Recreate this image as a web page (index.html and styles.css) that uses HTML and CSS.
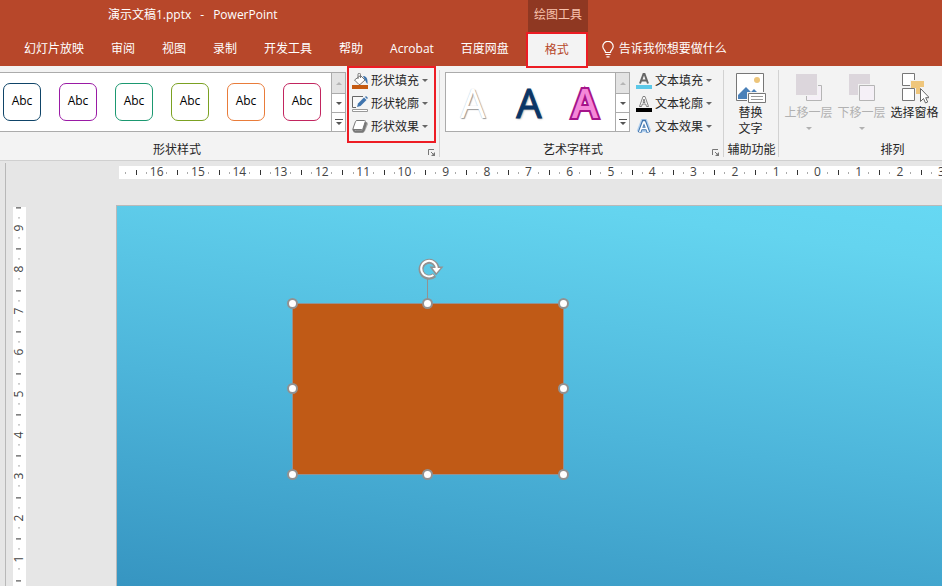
FILE: index.html
```html
<!DOCTYPE html>
<html lang="zh-CN">
<head>
<meta charset="utf-8">
<title>演示文稿1.pptx - PowerPoint</title>
<link rel="stylesheet" href="styles.css">
</head>
<body>
<svg class="defs" aria-hidden="true">
  <symbol id="caret" viewBox="0 0 6 3"><path d="M0 0h6L3 3z" fill="currentColor"/></symbol>
  <symbol id="up" viewBox="0 0 6 3"><path d="M0 3h6L3 0z" fill="currentColor"/></symbol>
  <symbol id="more" viewBox="0 0 8 7"><path d="M0 0h8v1H0zM1 3h6L4 6z" fill="currentColor"/></symbol>
  <symbol id="launcher" viewBox="0 0 8 8"><path d="M.5 6V.5H6M3 3l3 3" fill="none" stroke="currentColor"/><path d="M7 3v4H3z" fill="currentColor"/></symbol>
</svg>
<header class="header">
  <div class="titlebar">
    <h1 class="title"><span>演示文稿1.pptx</span><span>-</span><span>PowerPoint</span></h1>
    <span class="context">绘图工具</span>
  </div>
  <nav class="tabs">
    <button class="tab">幻灯片放映</button>
    <button class="tab">审阅</button>
    <button class="tab">视图</button>
    <button class="tab">录制</button>
    <button class="tab">开发工具</button>
    <button class="tab">帮助</button>
    <button class="tab">Acrobat</button>
    <button class="tab">百度网盘</button>
    <button class="tab active">格式</button>
    <button class="tell">
      <svg width="12" height="17" viewBox="0 0 12 17"><path d="M3.5 11.5C3.5 9 .8 8.500 .8 5.500A5 5 0 0 1 11.200 5.500C11.200 8.500 8.500 9 8.500 11.500zM3.500 13.500h5M4.500 15.800h3" fill="none" stroke="#fff" stroke-width="1.200"/></svg>
      告诉我你想要做什么
    </button>
  </nav>
</header>
<section class="ribbon">
  <div class="group group-shape">
    <div class="tools">
      <div class="gallery">
        <div class="swatches">
          <button class="swatch navy">Abc</button>
          <button class="swatch purple">Abc</button>
          <button class="swatch teal">Abc</button>
          <button class="swatch green">Abc</button>
          <button class="swatch orange">Abc</button>
          <button class="swatch rose">Abc</button>
        </div>
        <div class="scroller">
          <button aria-label="上一行" disabled><svg width="6" height="3"><use href="#up"/></svg></button>
          <button aria-label="下一行"><svg width="6" height="3"><use href="#caret"/></svg></button>
          <button aria-label="其他"><svg width="8" height="7"><use href="#more"/></svg></button>
        </div>
      </div>
      <div class="commands marked">
        <button class="command">
          <svg width="16" height="16" viewBox="0 0 16 16"><path d="M8.500 2.500l4.500 4.500-5 4.500H7L2.500 7z" fill="#fff" stroke="#777"/><path d="M6 6V1.500a1.200 1.200 0 0 1 2.500 0V5" fill="none" stroke="#777"/><path d="M11 3c3 0 5 2 4.500 8-1.500-1-1.500-3-2.500-4z" fill="#3f74ad"/><path d="M0 12h16v4H0z" fill="#c55a11"/></svg>
          形状填充<svg class="caret" width="6" height="3"><use href="#caret"/></svg></button>
        <button class="command">
          <svg width="16" height="16" viewBox="0 0 16 16"><path d="M11 .5H.5v11H4" fill="#f8f8f8" stroke="#666"/><path d="M5 11l1-3.500 6-6 2.500 2.500-6 6z" fill="#3f74ad"/><path d="M13 1l1-1 2 2-1 1z" fill="#3f74ad"/><path d="M.5 13.500h15v2H.5z" fill="#fff" stroke="#999"/></svg>
          形状轮廓<svg class="caret" width="6" height="3"><use href="#caret"/></svg></button>
        <button class="command">
          <svg width="16" height="16" viewBox="0 0 16 16"><path d="M5 3h10l1 2-3 7-2 2H3z" fill="#aaa"/><path d="M5 1.500h7.500q1.200 0 .8 1L11 9.500q-.3 1-1.500 1H2q-1.300 0-1-1L3.500 2.500q.4-1 1.500-1z" fill="#fff" stroke="#777"/><path d="M1 10l1.500 2.500H10q1 0 1.500-1l2.500-8" fill="none" stroke="#777" stroke-width="2"/></svg>
          形状效果<svg class="caret" width="6" height="3"><use href="#caret"/></svg></button>
      </div>
    </div>
    <footer class="caption"><span>形状样式</span><button class="launch" aria-label="设置形状格式"><svg width="8" height="8"><use href="#launcher"/></svg></button></footer>
  </div>
  <div class="group group-art">
    <div class="tools">
      <div class="gallery boxed">
        <div class="letters">
          <button class="letter white">A</button>
          <button class="letter blue">A</button>
          <button class="letter pink">A</button>
        </div>
        <div class="scroller">
          <button aria-label="上一行" disabled><svg width="6" height="3"><use href="#up"/></svg></button>
          <button aria-label="下一行"><svg width="6" height="3"><use href="#caret"/></svg></button>
          <button aria-label="其他"><svg width="8" height="7"><use href="#more"/></svg></button>
        </div>
      </div>
      <div class="commands">
        <button class="command">
          <svg width="16" height="16" viewBox="0 0 16 16"><path d="M4 10.500L7.500 1h1L12 10.500M5.500 7.500h5" fill="none" stroke="#666" stroke-width="2"/><path d="M0 12h16v4H0z" fill="#5bc8e8"/></svg>
          文本填充<svg class="caret" width="6" height="3"><use href="#caret"/></svg></button>
        <button class="command">
          <svg width="16" height="16" viewBox="0 0 16 16"><path d="M3.500 10.500L7 .5h2l3.500 10h-2l-.8-2.500H6.300l-.8 2.500zM7 6.500h2L8 3z" fill="#fff" stroke="#666" stroke-width=".8"/><path d="M0 12h16v4H0z" fill="#000"/></svg>
          文本轮廓<svg class="caret" width="6" height="3"><use href="#caret"/></svg></button>
        <button class="command">
          <svg width="16" height="16" viewBox="0 0 16 16"><path d="M3.500 13L7.500 2.500h1L12.500 13M5 10h6" fill="none" stroke="#b5d2ef" stroke-width="6"/><path d="M3.500 13.500L7.500 2.500h1L12.500 13.500M5 9.500h6" fill="none" stroke="#3f74ad" stroke-width="3.600"/><path d="M3.700 13L7.600 3h.8l3.900 10M5 9.500h6" fill="none" stroke="#fff" stroke-width="1.700"/></svg>
          文本效果<svg class="caret" width="6" height="3"><use href="#caret"/></svg></button>
      </div>
    </div>
    <footer class="caption"><span>艺术字样式</span><button class="launch" aria-label="设置文本效果格式"><svg width="8" height="8"><use href="#launcher"/></svg></button></footer>
  </div>
  <div class="group group-alt">
    <div class="tools">
      <button class="big">
        <svg width="30" height="32" viewBox="0 0 30 32"><path d="M.5.500h27v27H.5z" fill="#fff" stroke="#777"/><circle cx="21" cy="7" r="3" fill="#edc57b"/><path d="M2 26v-4l8-8 5 5 3-3 6 6v4z" fill="#4a80b8"/><path d="M11 19h19v13H11z" fill="#f3f3f3"/><path d="M12.500 20.500h17v9h-17z" fill="#fff" stroke="#777"/><path d="M15 23.500h12M15 26.500h12" stroke="#999"/></svg>
        <span>替换<br>文字</span>
      </button>
    </div>
    <footer class="caption"><span>辅助功能</span></footer>
  </div>
  <div class="group group-arrange">
    <div class="tools">
      <button class="big" disabled>
        <svg width="28" height="32" viewBox="0 0 28 32"><path d="M11.500 12.500h15v15h-15z" fill="#f5f0f7" stroke="#b5b5b5"/><path d="M0 0h23v23H0z" fill="#f3f3f3"/><path d="M1 1h21v21H1z" fill="#dcd6dc"/></svg>
        <span>上移一层</span><svg class="caret" width="6" height="3"><use href="#caret"/></svg>
      </button>
      <button class="big" disabled>
        <svg width="28" height="32" viewBox="0 0 28 32"><path d="M1 1h21v21H1z" fill="#dcd6dc"/><path d="M10 11h18v18H10z" fill="#f3f3f3"/><path d="M11.500 12.500h15v15h-15z" fill="#f5f0f7" stroke="#b5b5b5"/></svg>
        <span>下移一层</span><svg class="caret" width="6" height="3"><use href="#caret"/></svg>
      </button>
      <button class="big">
        <svg width="28" height="32" viewBox="0 0 28 32"><path d="M1.500.5h12v12h-12zM1.500 15.500h12v12h-12z" fill="#fff" stroke="#777"/><path d="M9 7h15v14h-8v-6H9z" fill="#f3f3f3"/><path d="M10 8h13v6h-4v7h-4v-6h-5z" fill="#efc67c"/><path d="M19.500 15.500v13l3-3 2 4.500 2.200-1-2-4.300h3.600z" fill="#fff" stroke="#666"/></svg>
        <span>选择窗格</span>
      </button>
    </div>
    <footer class="caption"><span>排列</span></footer>
  </div>
</section>
<main class="workspace">
  <div class="ruler-h"><div class="scale"><span>16</span><span>15</span><span>14</span><span>13</span><span>12</span><span>11</span><span>10</span><span>9</span><span>8</span><span>7</span><span>6</span><span>5</span><span>4</span><span>3</span><span>2</span><span>1</span><span>0</span><span>1</span><span>2</span><span>3</span></div></div>
  <div class="ruler-v"><span>9</span><span>8</span><span>7</span><span>6</span><span>5</span><span>4</span><span>3</span><span>2</span><span>1</span><span></span></div>
  <div class="slide">
    <div class="shape">
      <i class="stem"></i>
      <svg class="rotate" width="26" height="24" viewBox="0 0 26 24"><g fill="none"><path d="M16.500 18.200A8 8 0 1 1 19 11" stroke="#929292" stroke-width="5"/><path d="M11.500 9.500h14L18 18.500z" fill="#929292"/><path d="M15.500 18A7.800 7.800 0 1 1 18.800 12" stroke="#fff" stroke-width="2"/><path d="M14.500 11h8L18.300 16z" fill="#fff"/></g></svg>
      <i class="handle nw"></i><i class="handle n"></i><i class="handle ne"></i>
      <i class="handle w"></i><i class="handle e"></i>
      <i class="handle sw"></i><i class="handle s"></i><i class="handle se"></i>
    </div>
  </div>
</main>
</body>
</html>
```
FILE: styles.css
```css
* { box-sizing: border-box; }
body {
  margin: 0;
  height: 100vh;
  display: flex;
  flex-direction: column;
  overflow: hidden;
  font: 12px/16px "Open Sans", "Noto Sans CJK SC", sans-serif;
  color: #262626;
  background: #e6e6e6;
}
button {
  font: inherit;
  color: inherit;
  background: none;
  border: 0;
  padding: 0;
  white-space: nowrap;
}
svg { display: block; flex: none; }
.defs { position: absolute; width: 0; height: 0; }

.header { background: #b7472a; color: #fff; }
.titlebar { display: flex; height: 32px; }
.title {
  display: flex;
  gap: 9px;
  width: 528px;
  margin: 0;
  padding: 7px 0 0 108px;
  font-size: 12px;
  font-weight: 400;
  line-height: 16px;
}
.context {
  width: 60px;
  padding-top: 7px;
  text-align: center;
  color: #f9c3ae;
  background: #8f3822;
}
.tabs { display: flex; gap: 1px; height: 34px; padding-left: 11px; }
.tab { padding: 0 13px; }
.tab.active {
  width: 62px;
  height: 36px;
  margin-left: 3px;
  color: #b7472a;
  background: #f3f3f3;
  border: 2px solid #ed1c24;
  z-index: 1;
}
.tell { display: flex; align-items: center; gap: 5px; margin-left: 13px; }

.ribbon {
  display: flex;
  height: 95px;
  background: #f3f3f3;
  border-bottom: 1px solid #d0d0d0;
  overflow: hidden;
}
.group {
  position: relative;
  display: flex;
  flex-direction: column;
  flex: none;
}
.group + .group::before {
  content: "";
  position: absolute;
  left: -1px;
  top: 4px;
  bottom: 3px;
  width: 1px;
  background: #d2d2d2;
}
.group-shape { width: 440px; }
.group-art { width: 284px; }
.group-alt { width: 55px; }
.group-arrange { flex: 1; }
.tools { display: flex; height: 77px; }
.caption { display: flex; flex: 1; padding: 0 4px 3px 0; text-align: center; line-height: 14px; }
.caption span { flex: 1; }
.group-shape .caption span { padding-right: 74px; }
.group-art .caption span { padding-right: 6px; }
.group-alt .caption { padding: 0; }
.group-arrange .caption { padding-left: 68px; }
.launch { align-self: flex-end; color: #777; }

.gallery {
  display: flex;
  height: 60px;
  margin-top: 6px;
  background: #fff;
  border: 1px solid #ababab;
  border-left: 0;
}
.gallery.boxed { margin-left: 5px; border-left: 1px solid #ababab; }
.swatches { display: flex; align-items: center; gap: 18px; padding: 0 10px 0 3px; }
.swatch {
  width: 38px;
  height: 38px;
  padding-bottom: 3px;
  color: #000;
  background: #fff;
  border: 1px solid;
  border-radius: 7px;
}
.navy { border-color: #0f4468; }
.purple { border-color: #9a1aa5; }
.teal { border-color: #1b9870; }
.green { border-color: #7ba122; }
.orange { border-color: #e97c3a; }
.rose { border-color: #c2255f; }
.scroller {
  display: grid;
  grid-template-rows: 20px 19px 19px;
  width: 14px;
  border-left: 1px solid #ababab;
  color: #555;
}
.scroller button { display: grid; place-items: center; }
.scroller button + button { border-top: 1px solid #ababab; }
.scroller button:disabled { background: #e3e3e3; color: #b5b5b5; }

.commands { display: flex; flex-direction: column; padding: 3px 6px; }
.commands.marked { margin-left: 1px; padding: 1px 6px 3px 3px; border: 2px solid #ed1c24; }
.command { display: flex; align-items: center; gap: 3px; height: 23px; }
.caret { color: #666; }

.letters { display: grid; grid-template-columns: repeat(3, 56px); padding-right: 1px; }
.letter { font-size: 40px; line-height: 56px; height: 58px; padding: 2px 2px 0 0; }
.white { color: #fff; text-shadow: 1px 1px 1px #999, 0 0 1px #bbb; }
.blue { color: #0b3566; -webkit-text-stroke: 1px #0b3566; text-shadow: 1px 1px 2px #999; }
.pink { color: #f588d8; font-weight: 600; -webkit-text-stroke: 4px #a5148a; paint-order: stroke fill; }

.big { display: flex; flex-direction: column; align-items: center; width: 53px; padding-top: 7px; line-height: 16px; }
.big .caret { margin-top: 6px; }
.big:disabled, .big:disabled .caret { color: #b1b1b1; }
.group-arrange .tools { padding-left: 3px; }

.workspace {
  flex: 1;
  min-height: 0;
  display: grid;
  grid-template: 44px 1fr / 5px 8px 14px 89px 1fr;
  overflow: hidden;
  font-size: 12px;
  color: #444;
}
.workspace::before {
  content: "";
  grid-area: 1 / 2 / 3 / 3;
  margin-top: 2px;
  border-left: 1px solid #b8b8b8;
}
.ruler-h {
  grid-area: 1 / 5;
  height: 13px;
  margin: 5px 0 0 3px;
  padding-left: 17px;
  background: linear-gradient(#aaa, #aaa) 6px 6px / 1px 2px no-repeat #fff;
}
.scale { display: grid; grid-template-columns: repeat(20, 1fr); margin-right: -20px; }
.scale span {
  height: 13px;
  line-height: 12px;
  text-align: center;
  background:
    linear-gradient(#333, #333) 0 4px / 1px 5px no-repeat,
    linear-gradient(#aaa, #aaa) 25% 6px / 1px 2px no-repeat,
    linear-gradient(#aaa, #aaa) 75% 6px / 1px 2px no-repeat;
}
.ruler-v {
  grid-area: 2 / 3;
  display: grid;
  grid-template-rows: repeat(10, 1fr);
  width: 13px;
  height: 414px;
  margin-top: 2px;
  background: #fff;
}
.ruler-v span {
  writing-mode: vertical-rl;
  transform: rotate(180deg);
  width: 13px;
  line-height: 11px;
  text-align: center;
  background:
    linear-gradient(#333, #333) 5px 100% / 5px 1px no-repeat,
    linear-gradient(#aaa, #aaa) 6px 25% / 2px 1px no-repeat,
    linear-gradient(#aaa, #aaa) 6px 75% / 2px 1px no-repeat;
}
.slide {
  grid-area: 2 / 5;
  position: relative;
  border: solid #b9b9b9;
  border-width: 1px 0 0 1px;
  background: linear-gradient(188deg, #66d8f3 0%, #64d4ef 10%, #4db5da 52%, #3796c2 92%, #3390be 100%);
}
.shape {
  position: absolute;
  left: 175px;
  top: 97px;
  width: 272px;
  height: 172px;
  background: #c05a16;
  border: 1px solid #929292;
}
.handle {
  position: absolute;
  width: 11px;
  height: 11px;
  margin: -5px;
  background: #fff;
  border: 2px solid #929292;
  border-radius: 50%;
}
.nw, .n, .ne { top: -1px; }
.w, .e { top: calc(50% - 1px); }
.sw, .s, .se { top: 100%; }
.nw, .w, .sw { left: -1px; }
.n, .s { left: calc(50% - 1px); }
.ne, .e, .se { left: 100%; }
.stem { position: absolute; left: calc(50% - 1px); bottom: 100%; height: 25px; border-left: 1px solid #929292; }
.rotate { position: absolute; left: 50%; top: -47px; margin-left: -10px; }
```
